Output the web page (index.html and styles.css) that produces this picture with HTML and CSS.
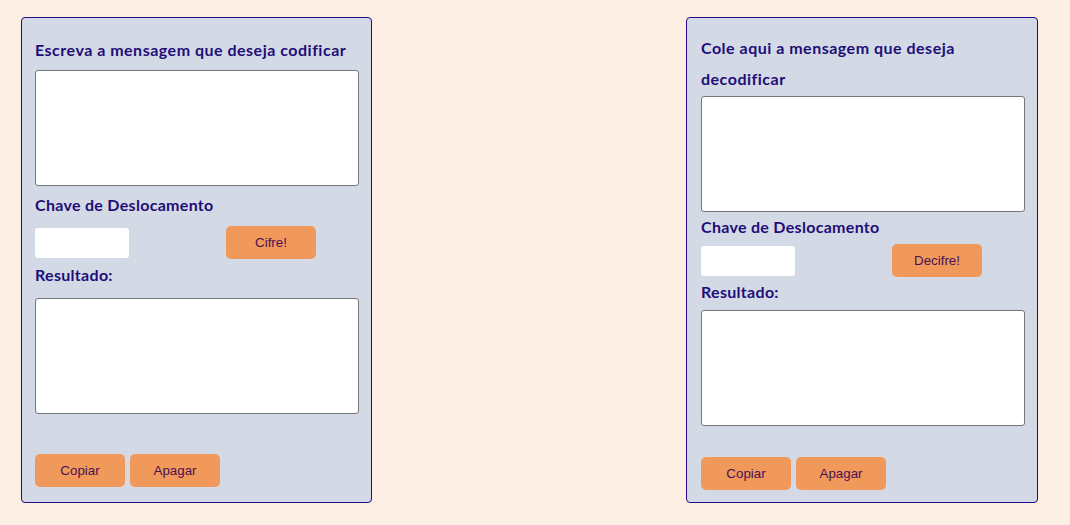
FILE: index.html
```html
<!DOCTYPE html>
<html lang="pt-BR">
<head>
<meta charset="utf-8">
<title>Cifra de César</title>
<link rel="stylesheet" href="styles.css">
</head>
<body>
<main class="page">
  <section class="card card-encode">
    <h2 class="title">Escreva a mensagem que deseja codificar</h2>
    <textarea class="box"></textarea>
    <label class="label">Chave de Deslocamento</label>
    <div class="key-row">
      <input class="key" type="text">
      <button class="btn btn-run">Cifre!</button>
    </div>
    <label class="label label-result">Resultado:</label>
    <textarea class="box box-result"></textarea>
    <div class="actions">
      <button class="btn">Copiar</button>
      <button class="btn">Apagar</button>
    </div>
  </section>

  <section class="card card-decode">
    <h2 class="title">Cole aqui a mensagem que deseja decodificar</h2>
    <textarea class="box"></textarea>
    <label class="label">Chave de Deslocamento</label>
    <div class="key-row">
      <input class="key" type="text">
      <button class="btn btn-run">Decifre!</button>
    </div>
    <label class="label label-result">Resultado:</label>
    <textarea class="box box-result"></textarea>
    <div class="actions">
      <button class="btn">Copiar</button>
      <button class="btn">Apagar</button>
    </div>
  </section>
</main>
</body>
</html>
```

FILE: styles.css
```css
* { box-sizing: border-box; }

html, body {
  margin: 0;
  padding: 0;
  background: #fdefe4;
}

.page {
  display: flex;
  justify-content: space-between;
  align-items: stretch;
  padding: 17px 32px 0 21px;
}

.card {
  width: 351px;
  background: #d3dae6;
  border: 1px solid #24098a;
  border-radius: 4px;
  display: flex;
  flex-direction: column;
  padding: 16px 12px 15px 13px;
  font-family: "Lato", "Open Sans", sans-serif;
  font-weight: 700;
  font-size: 16px;
  letter-spacing: 0.5px;
  color: #1f0d78;
}

.title {
  margin: 0;
  font-size: 16px;
  font-weight: 700;
  line-height: 32px;
}

.box {
  display: block;
  width: 324px;
  height: 116px;
  margin: 4px 0 0;
  border: 1px solid #767676;
  border-radius: 3px;
  background: #fff;
  resize: none;
}

.label {
  display: block;
  line-height: 32px;
  margin-top: 3px;
  letter-spacing: 0.3px;
}

.label-result { margin-top: 0; }

.box-result { margin-top: 7px; }

.key-row {
  display: flex;
  align-items: center;
  margin-top: 5px;
}

.key {
  width: 94px;
  height: 30px;
  border: none;
  border-radius: 3px;
  background: #fff;
  padding: 0 6px;
}

.btn {
  width: 90px;
  height: 33px;
  border: none;
  border-radius: 5px;
  background: #f0995a;
  color: #4a1255;
  font-family: "Liberation Sans", Arial, sans-serif;
  font-size: 13.33px;
  font-weight: 400;
  letter-spacing: 0;
  padding: 0;
}

.btn-run { margin-left: 97px; }

.actions {
  display: flex;
  gap: 5px;
  margin-top: 40px;
}

/* decode card spacing */
.card-decode {
  width: 352px;
  padding-top: 14px;
  padding-left: 14px;
  padding-bottom: 12px;
}

.card-decode .title { line-height: 31px; }

.card-decode .box { margin-top: 2px; }

.card-decode .label {
  line-height: 24px;
  margin-top: 3px;
}

.card-decode .key-row { margin-top: 5px; }

.card-decode .box-result { margin-top: 6px; }

.card-decode .actions { margin-top: 31px; }
```
